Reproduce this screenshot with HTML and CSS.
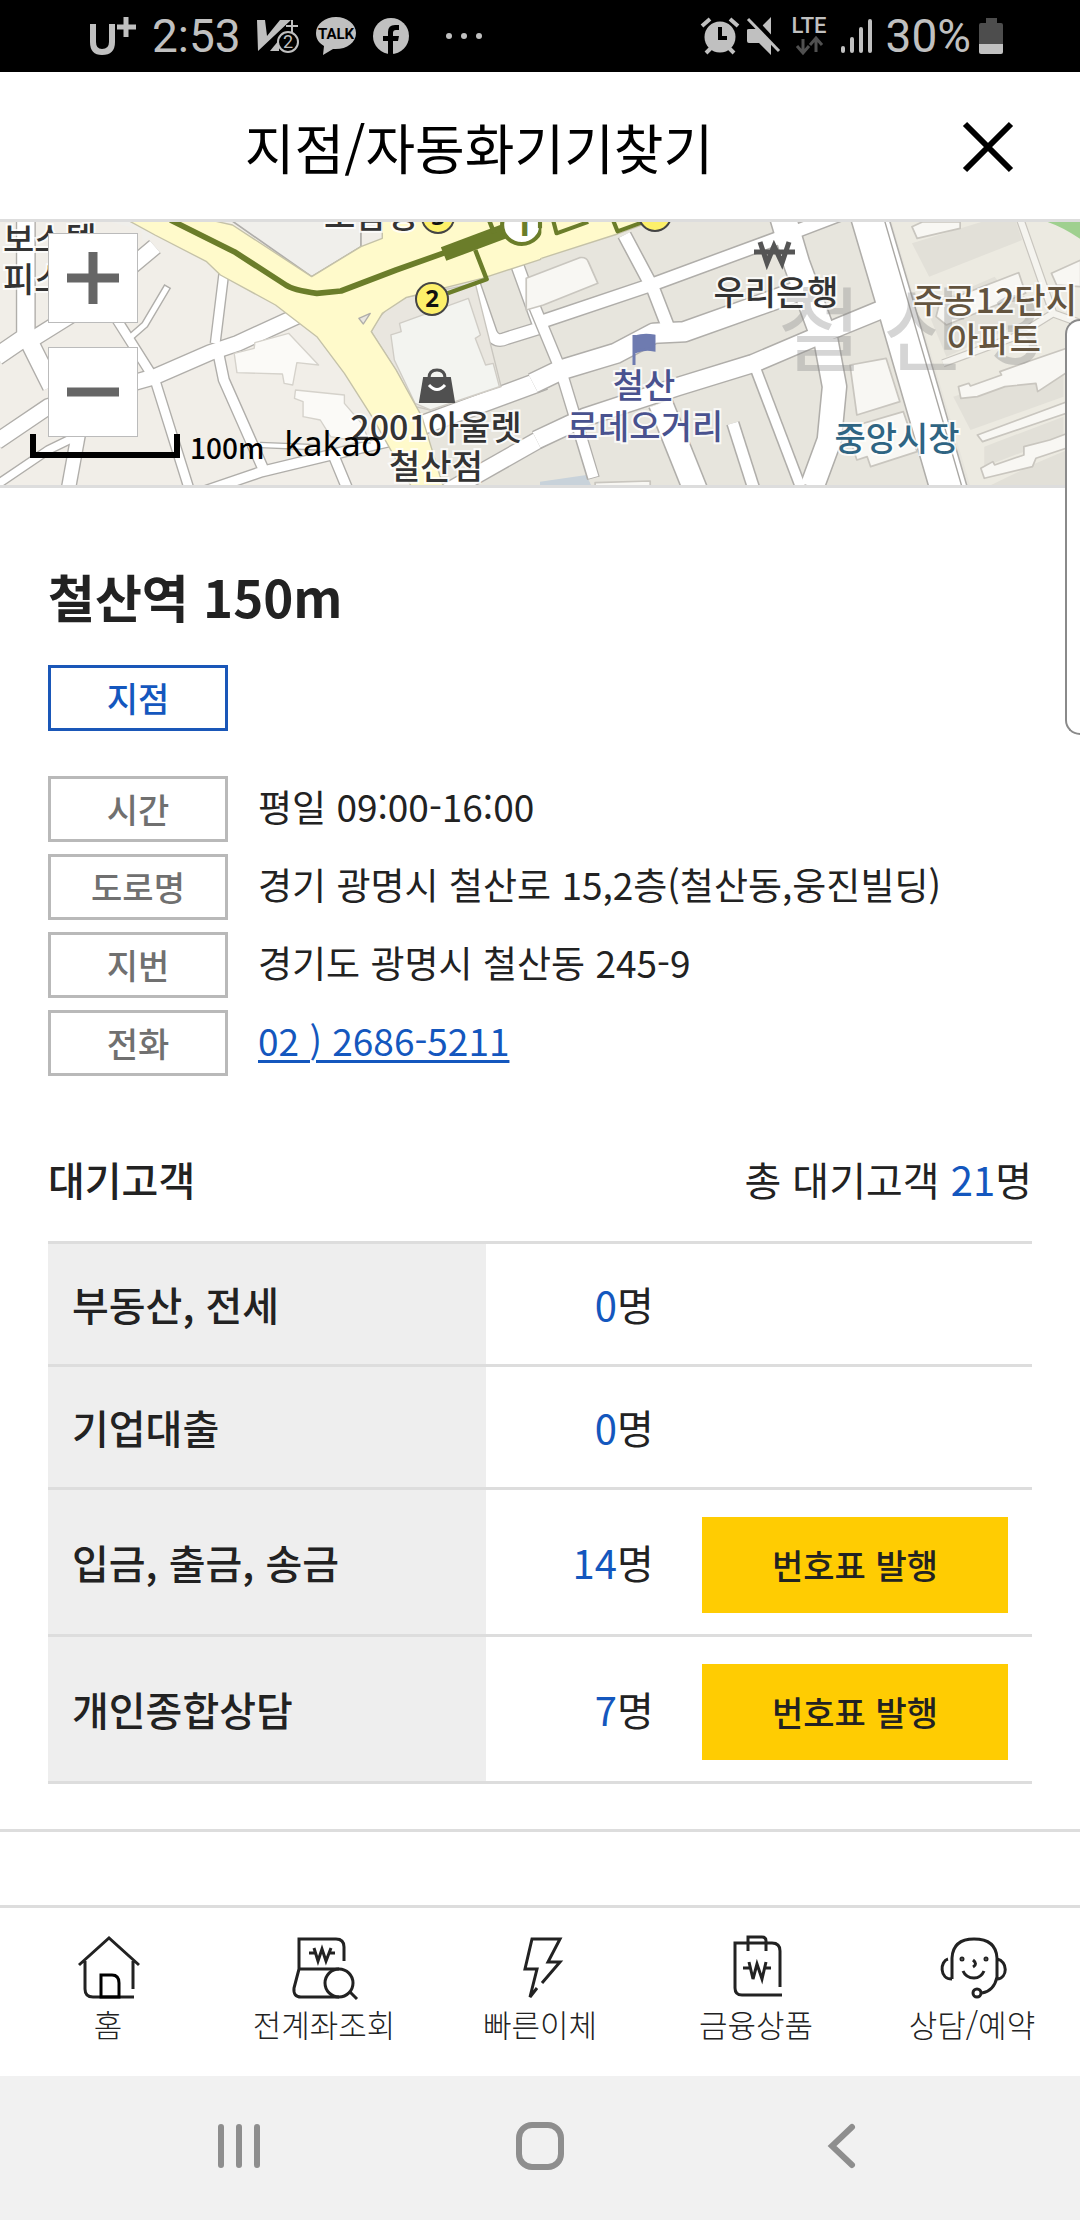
FILE: index.html
```html
<!DOCTYPE html>
<html lang="ko">
<head>
<meta charset="utf-8">
<meta name="viewport" content="width=device-width, initial-scale=1">
<title>지점/자동화기기찾기</title>
<link rel="stylesheet" href="styles.css">
</head>
<body>
<div class="status">
  <div class="status-side">
    <svg class="ic-carrier" width="48" height="40" viewBox="0 0 48 40" fill="none" stroke="#c0c0c0"><path d="M3 8V26Q3 36 12 36Q22 36 22 26V8" stroke-width="6"/><path d="M27 11H46M36 1V21" stroke-width="5"/></svg>
    <span class="status-text">2:53</span>
    <svg class="ic-v" width="42" height="36" viewBox="0 0 42 36"><path d="M0 2H8L10 18L23 2H34L1 33Z" fill="#c0c0c0"/><path d="M13 33L22 22V33Z" fill="#c0c0c0"/><path d="M29 8H41M35 2V14" stroke="#c0c0c0" stroke-width="2"/><circle cx="31" cy="24" r="10" fill="#000" stroke="#c0c0c0" stroke-width="2"/><text x="31" y="30" font-size="18" text-anchor="middle" fill="#c0c0c0">2</text></svg>
    <svg class="ic-talk" width="40" height="40" viewBox="0 0 40 40"><path d="M20 1C9 1 0 8 0 17C0 23 3 27 8 30L7 39L17 33C30 34 40 27 40 17C40 8 31 1 20 1Z" fill="#c0c0c0"/><text x="20" y="23" font-size="15" font-weight="700" text-anchor="middle">TALK</text></svg>
    <svg class="ic-fb" width="36" height="36" viewBox="0 0 36 36"><circle cx="18" cy="18" r="18" fill="#c0c0c0"/><path d="M15 36V23H10V18H15V14Q15 7 22 7H26V12H23Q20 12 20 15V18H26L25 23H20V36Z"/></svg>
    <svg class="ic-dots" width="38" height="8" viewBox="0 0 38 8" fill="#c0c0c0"><circle cx="4" cy="4" r="3"/><circle cx="19" cy="4" r="3"/><circle cx="34" cy="4" r="3"/></svg>
  </div>
  <div class="status-side">
    <svg width="38" height="38" viewBox="0 0 38 38"><g stroke="#c0c0c0" stroke-width="4"><path d="M1 9L9 2M29 2L37 9M5 36L11 30M27 30L33 36"/></g><circle cx="19" cy="20" r="15.500" fill="#c0c0c0"/><path d="M19 10V21H26" fill="none" stroke="#000" stroke-width="4"/></svg>
    <svg class="ic-mute" width="34" height="38" viewBox="0 0 34 38"><path d="M0 13Q0 12 2 12H12L24 0V38L12 26H2Q0 26 0 24Z" fill="#c0c0c0"/><path d="M3 -1L36 35" stroke="#000" stroke-width="6"/><path d="M1 2L32 34" stroke="#c0c0c0" stroke-width="3"/></svg>
    <svg class="ic-lte" width="38" height="40" viewBox="0 0 38 40"><text x="19" y="17" font-size="22" font-weight="500" text-anchor="middle" fill="#c0c0c0">LTE</text><path d="M13 23V36M7 30L13 37L19 30M26 36V23M20 29L26 22L32 29" fill="none" stroke="#505050" stroke-width="3"/></svg>
    <svg class="ic-signal" width="32" height="36" viewBox="0 0 32 36" stroke="#c0c0c0" stroke-width="4" stroke-linecap="round"><path d="M3 30V33M12 21V33M21 11V33M30 3V33"/></svg>
    <span class="status-text">30%</span>
    <svg class="ic-battery" width="24" height="36" viewBox="0 0 24 36"><path d="M7 0H18V5H22Q24 5 24 7V26H0V7Q0 5 2 5H7Z" fill="#4d4d4d"/><path d="M0 26H24V34Q24 36 22 36H2Q0 36 0 34Z" fill="#c0c0c0"/></svg>
  </div>
</div>

<header class="header">
  <h1>지점/자동화기기찾기</h1>
  <button class="close" aria-label="닫기"><svg width="52" height="52" viewBox="0 0 52 52"><path d="M3 3L49 49M49 3L3 49" stroke="#000" stroke-width="6"/></svg></button>
</header>

<div class="map">
  <svg class="map-art" viewBox="0 0 1080 263" preserveAspectRatio="xMidYMid slice">
    <rect width="1080" height="263" fill="#f1eee8"/>
    <rect x="520" width="560" height="263" fill="#e7e5dd"/>
    <!-- station side and west blocks -->
    <g transform="scale(.3444 .3333) translate(0 -36)" fill="none" stroke-linejoin="round">
      <path d="M1078 365L1180 262L1400 205L1568 150V830H1285L1225 620Z" fill="#e7e5dd"/>
      <path d="M670 30L905 200L1048 110V30Z" fill="#f0efeb" stroke="#b0aeaa" stroke-width="5"/>
      <path d="M300 30H380L450 75L415 95L410 60Z" fill="#f0efeb"/>
      <g stroke="#b0aeaa">
        <path d="M75 0V380L-10 440M75 375L150 530" stroke-width="58"/>
        <path d="M-10 695L140 590L450 500L610 428L690 400L880 310M75 400L230 300L450 110" stroke-width="52"/>
        <path d="M340 330L450 510L550 840M650 190L625 400" stroke-width="33"/>
        <path d="M375 385L420 345L487 228" stroke-width="23"/>
        <path d="M630 410L650 510L770 790M590 845L760 785L1000 725L1150 690M970 740L1010 840" stroke-width="36"/>
        <path d="M-10 825L140 720L240 670" stroke-width="30"/>
        <path d="M228 670L198 840" stroke-width="46"/>
        <path d="M755 705L920 712" stroke-width="20"/>
        <path d="M1200 655L1580 510" stroke-width="62"/>
        <path d="M1290 850L1580 680" stroke-width="55"/>
        <path d="M1375 220L1425 370Q1440 400 1470 385L1580 350M1500 160L1570 360" stroke-width="42"/>
      </g>
      <g stroke="#fff">
        <path d="M75 0V380L-10 440M75 375L150 530" stroke-width="50"/>
        <path d="M-10 695L140 590L450 500L610 428L690 400L880 310M75 400L230 300L450 110" stroke-width="44"/>
        <path d="M340 330L450 510L550 840M650 190L625 400" stroke-width="25"/>
        <path d="M375 385L420 345L485 232" stroke-width="15"/>
        <path d="M630 410L650 510L770 790M590 845L760 785L1000 725L1150 690M970 740L1010 840" stroke-width="28"/>
        <path d="M-10 825L140 720L240 670" stroke-width="22"/>
        <path d="M228 670L198 840" stroke-width="38"/>
        <path d="M755 705L920 712" stroke-width="12"/>
        <path d="M1200 655L1580 510" stroke-width="54"/>
        <path d="M1290 850L1580 680" stroke-width="47"/>
        <path d="M1375 220L1425 370Q1440 400 1470 385L1580 350M1500 160L1570 360" stroke-width="34"/>
      </g>
      <g fill="#fbfaf7" stroke="#d5d2cb" stroke-width="4">
        <path d="M680 430L738 415L740 398L838 370L925 465L862 458L850 525L825 520L820 492L688 488Z"/>
        <path d="M858 540L1000 555V580L1050 640L1075 700L960 680L930 630L880 620V575L855 565Z"/>
      </g>
      <path d="M1078 365Q1110 290 1180 262L1380 220L1455 530L1250 600L1205 590L1150 480Z" fill="#e9e6df" stroke="#c9c6bf" stroke-width="4"/>
      <path d="M1135 375L1165 365L1160 340L1360 265L1395 375L1380 385L1410 465L1432 460L1450 530L1250 600L1205 580L1145 450Z" fill="#f3f4f0" stroke="#d0cdc6" stroke-width="4"/>
      <path d="M370 30L450 75L600 155L640 195L800 285L920 380L1000 490L1080 620L1200 840H1290L1225 620L1150 480L1078 365L1110 310L1180 262L1400 205L1570 148V30H1110V85L1048 110L905 200L675 45L610 30Z" fill="#fffacb" stroke="#c5c2a8" stroke-width="4"/>
      <path d="M1042 325L1075 310L1055 342Z" fill="#e9e6df" stroke="#b0aeaa" stroke-width="4"/>
      <path d="M1562 30V147L1580 141V30Z" fill="#fffacb"/>
      <g stroke="#6b7d2a">
        <path d="M495 30L680 125L830 225Q850 240 920 250L990 243L1150 180L1300 125" stroke-width="17"/>
        <path d="M1288 132L1500 50" stroke-width="44"/>
        <path d="M1380 120L1413 208L1300 250M1420 30L1435 70" stroke-width="13"/>
        <circle cx="1515" cy="45" r="57" fill="#fff" stroke-width="12"/>
      </g>
    </g>
    <!-- east blocks -->
    <g transform="translate(540 -12) scale(.3444 .3333)" fill="none" stroke-linejoin="round">
      <path d="M1020 30L1250 830H1570V30Z" fill="#eceae1"/>
      <g fill="#e2e0d8"><path d="M1080 100L1300 30H1380L1400 90L1130 200Z"/><path d="M1120 290L1320 200L1420 330L1180 440Z"/><path d="M1200 560L1520 450V560L1250 660Z"/><path d="M1290 710L1520 620V680L1290 770ZM1300 830L1440 760L1530 720V830Z"/></g>
      <path d="M4 145L225 72L320 36V0H4Z" fill="#fffacb"/>
      <path d="M4 145L225 72L320 36" stroke="#c5c2a8" stroke-width="4"/>
      <path d="M0 815L135 795L150 830H0Z" fill="#c8d2da"/>
      <g stroke="#b0aeaa">
        <path d="M-10 340L330 222L690 85L880 10" stroke-width="45"/>
        <path d="M245 75L330 240L375 360" stroke-width="44"/>
        <path d="M-20 520L60 480L220 430L330 370L420 365L800 225" stroke-width="66"/>
        <path d="M-20 280L60 480L110 650L155 805" stroke-width="38"/>
        <path d="M-10 690L130 622L400 530L620 460L870 350L1000 295" stroke-width="60"/>
        <path d="M350 580L455 850" stroke-width="76"/>
        <path d="M560 640L625 850" stroke-width="40"/>
        <path d="M620 460L760 840" stroke-width="36"/>
        <path d="M830 390L855 530L840 690L790 830" stroke-width="76"/>
        <path d="M705 20L745 160L820 370" stroke-width="82"/>
        <path d="M950 0L1030 280L1190 850" stroke-width="112"/>
      </g>
      <g stroke="#fff">
        <path d="M-10 340L330 222L690 85L880 10" stroke-width="36"/>
        <path d="M245 75L330 240L375 360" stroke-width="35"/>
        <path d="M-20 520L60 480L220 430L330 370L420 365L800 225" stroke-width="57"/>
        <path d="M-20 280L60 480L110 650L155 802" stroke-width="30"/>
        <path d="M-10 690L130 622L400 530L620 460L870 350L1000 295" stroke-width="51"/>
        <path d="M350 580L455 850" stroke-width="67"/>
        <path d="M560 640L625 850" stroke-width="31"/>
        <path d="M620 460L760 840" stroke-width="27"/>
        <path d="M830 390L855 530L840 690L790 830" stroke-width="67"/>
        <path d="M705 20L745 160L820 370" stroke-width="73"/>
        <path d="M950 0L1030 280L1190 850" stroke-width="103"/>
      </g>
      <path d="M1000 30L1225 830" stroke="#a9a7a3" stroke-width="4"/>
      <g fill="#f8f7f3" stroke="#c9c6bf" stroke-width="5">
        <path d="M-40 205L115 143Q135 140 140 155L168 220L10 285L-40 300Z"/>
        <path d="M900 465L1005 445L1045 575L920 615Z"/>
        <path d="M890 655L1055 605L1095 725L960 770L950 740L920 750Z"/>
        <path d="M160 830V818L320 813V830Z"/>
        <path d="M1080 50L1110 36H1220V55L1095 85Z"/>
        <path d="M1150 320L1160 280L1390 188L1410 250L1180 345Z"/>
        <path d="M1485 190L1570 150V230L1500 225Z"/>
        <path d="M1215 530L1245 520L1250 528L1340 495L1335 485L1430 450L1570 400V460L1445 545L1440 520L1350 530L1270 560L1222 565Z"/>
        <path d="M1270 675L1570 560V595L1285 695Z"/>
        <path d="M1280 775L1315 755L1320 765L1405 735V710L1480 690L1570 655V700L1440 745L1430 770L1290 805Z"/>
      </g>
      <path d="M1395 30L1490 310L1380 380L1170 460M1490 310L1570 340" stroke="#c9c6bf" stroke-width="25"/>
      <path d="M1395 30L1490 310L1380 380L1170 460M1490 310L1570 340" stroke="#f5f4ef" stroke-width="18"/>
      <path d="M1455 30Q1510 45 1570 88V30Z" fill="#9fd08f"/>
      <path d="M0 30V55M38 30L48 70L140 36M212 30L225 64L300 36" stroke="#6b7d2a" stroke-width="12"/>
    </g>
    <g class="map-exit">
      <circle cx="432" cy="77" r="16"/><circle cx="438" cy="-5" r="16"/><circle cx="655" cy="-7" r="16"/>
      <text x="432" y="85">2</text><text x="438" y="3">3</text>
      <text class="line-no" x="523" y="14">1</text>
    </g>
    <g class="map-area"><text x="820" y="142">철</text><text x="925" y="142">산</text><text x="1017" y="142">3</text></g>
    <path d="M424 156H450L454 180H420Z" fill="#505050" stroke="#505050" stroke-width="2"/>
    <path d="M429 156Q429 148 437 148Q445 148 445 156" fill="none" stroke="#505050" stroke-width="3"/>
    <path d="M429 163Q437 172 445 163" fill="none" stroke="#fff" stroke-width="3"/>
    <path d="M634 143V113M635 115Q644 112 654 114V128Q644 126 635 130Z" fill="#6e7bb0" stroke="#6e7bb0" stroke-width="3"/>
    <path d="M754 30H795M760 20L767 41L774 24L782 41L789 20" fill="none" stroke="#555" stroke-width="5"/>
    <g class="map-label">
      <text x="3" y="30" class="start">보스텔</text>
      <text x="3" y="70" class="start">피스</text>
      <text x="324" y="6" class="start">보람병</text>
      <text x="436" y="218">2001아울렛</text>
      <text x="436" y="257">철산점</text>
      <text x="776" y="83">우리은행</text>
      <g fill="#49528f"><text x="644" y="176">철산</text><text x="645" y="217">로데오거리</text></g>
      <text x="897" y="229" fill="#2f6583">중앙시장</text>
      <g fill="#63543f"><text x="995" y="91">주공12단지</text><text x="994" y="130">아파트</text></g>
    </g>
  </svg>
  <div class="map-zoom">
    <button aria-label="확대"><svg width="52" height="52" viewBox="0 0 52 52"><path d="M0 26H52M26 0V52" stroke="#666" stroke-width="9"/></svg></button>
    <button aria-label="축소"><svg width="52" height="52" viewBox="0 0 52 52"><path d="M0 26H52" stroke="#666" stroke-width="9"/></svg></button>
  </div>
  <div class="map-scale"><span class="scale-bar"></span><span class="scale-text">100m</span><span class="scale-brand">kakao</span></div>
</div>

<main class="branch">
  <h2>철산역 150m</h2>
  <span class="tag tag-blue">지점</span>
  <dl class="info">
    <div><dt class="tag">시간</dt><dd>평일 09:00-16:00</dd></div>
    <div><dt class="tag">도로명</dt><dd>경기 광명시 철산로 15,2층(철산동,웅진빌딩)</dd></div>
    <div><dt class="tag">지번</dt><dd>경기도 광명시 철산동 245-9</dd></div>
    <div><dt class="tag">전화</dt><dd><a href="tel:0226865211">02 ) 2686-5211</a></dd></div>
  </dl>
  <div class="queue-head"><h3>대기고객</h3><p>총 대기고객 <b>21</b>명</p></div>
  <table class="queue">
    <tbody>
      <tr><th scope="row">부동산, 전세</th><td class="count"><b>0</b>명</td><td class="action"></td></tr>
      <tr><th scope="row">기업대출</th><td class="count"><b>0</b>명</td><td class="action"></td></tr>
      <tr><th scope="row">입금, 출금, 송금</th><td class="count"><b>14</b>명</td><td class="action"><button>번호표 발행</button></td></tr>
      <tr><th scope="row">개인종합상담</th><td class="count"><b>7</b>명</td><td class="action"><button>번호표 발행</button></td></tr>
    </tbody>
  </table>
</main>

<nav class="tabs">
  <a href="#home"><svg viewBox="0 0 80 64"><path d="M11 29L41 2L71 29M17 25V53Q17 61 25 61H66M65 25V53"/><path d="M33 61V39H44Q51 39 51 47V61Z" stroke="#000"/></svg>홈</a>
  <a href="#accounts"><svg viewBox="0 0 80 64"><path d="M60 25V11Q60 3 52 3H15V33H55M15 33L10 52Q9 61 17 61H55M66 56L73 63"/><circle cx="55" cy="47" r="14"/><path d="M25 17H31M45 17H51M30 12L34 25L38 13L42 25L47 12" stroke-width="3"/></svg>전계좌조회</a>
  <a href="#transfer"><svg viewBox="0 0 80 64"><path d="M42 47L60 26H48L60 3H32L25 33H37L30 61L37 52"/></svg>빠른이체</a>
  <a href="#products"><svg viewBox="0 0 80 64"><path d="M64 51V15Q64 7 56 7H19V52Q19 59 26 59H66M32 15V1H46Q50 1 50 5V15M27 32H34M49 32H55M33 26L37 43L41 28L46 43L50 26"/></svg>금융상품</a>
  <a href="#counsel"><svg viewBox="0 0 80 64"><path d="M20 43V22Q21 3 42 3Q64 3 65 22V41Q62 55 50 57M16 23C8 25 7 43 20 43M65 23C76 25 76 42 65 43M31 35Q34 42 42 42Q49 42 52 35M41 24Q46 28 41 31"/><circle cx="45" cy="57" r="4"/><circle cx="30" cy="23" r="1"/><circle cx="54" cy="23" r="1"/></svg>상담/예약</a>
</nav>

<div class="sysnav">
  <button aria-label="최근 앱"><svg width="48" height="48" viewBox="0 0 48 48"><path d="M6 5V43M24 5V43M42 5V43"/></svg></button>
  <button aria-label="홈 화면"><svg width="48" height="48" viewBox="0 0 48 48"><rect x="3" y="3" width="42" height="42" rx="13"/></svg></button>
  <button aria-label="뒤로"><svg width="48" height="48" viewBox="0 0 48 48"><path d="M35 5L15 24L35 43"/></svg></button>
</div>

<div class="edge-panel"></div>
</body>
</html>
```

FILE: styles.css
```css
* { box-sizing: border-box; margin: 0; padding: 0; }
body {
  position: relative;
  background: #fff;
  color: #222;
  font-family: "Noto Sans CJK KR", sans-serif;
  overflow-x: hidden;
}
button { border: 0; background: none; font: inherit; color: inherit; }
svg { display: block; flex: none; }
h2 { font-weight: 700; }
h3, th { font-weight: 500; }

.status {
  display: flex;
  justify-content: space-between;
  height: 72px;
  padding: 0 77px 0 90px;
  background: #000;
  color: #c0c0c0;
  font-family: Roboto, sans-serif;
}
.status-side { display: flex; align-items: center; }
.status-side svg { overflow: visible; }
.status-text { font-size: 46px; line-height: 72px; }
.ic-carrier { margin-right: 14px; }
.ic-v { margin-left: 16px; }
.ic-talk, .ic-fb { margin-left: 17px; }
.ic-dots { margin-left: 36px; }
.ic-mute { margin-left: 8px; }
.ic-lte { margin-left: 9px; }
.ic-signal { margin: 0 14px 0 12px; }
.ic-battery { margin-left: 8px; }

.header {
  display: flex;
  align-items: center;
  height: 147px;
  padding: 2px 66px 0 60px;
}
.header h1 { flex: 1; text-align: center; font-size: 54px; font-weight: 400; color: #000; }
.close { width: 52px; height: 52px; margin-left: 64px; }

.map {
  position: relative;
  height: 269px;
  border-top: 3px solid #ddd;
  border-bottom: 3px solid #ddd;
  overflow: hidden;
}
.map-art { width: 100%; height: 263px; }
.map-label text { font-size: 34px; font-weight: 500; text-anchor: middle; paint-order: stroke; stroke: #fff; stroke-width: 4px; stroke-opacity: .8; }
.map-label { fill: #333; }
.map-label .start { text-anchor: start; }
.map-exit circle { fill: #fdf06a; stroke: #444; stroke-width: 2px; }
.map-exit text { font: 700 24px "Noto Sans", sans-serif; text-anchor: middle; fill: #111; }
.map-exit .line-no { font-size: 34px; fill: #6b7d2a; }
.map-area text { font-size: 92px; text-anchor: middle; fill: #888; fill-opacity: .35; }
.map-zoom { position: absolute; top: 11px; left: 48px; display: grid; gap: 24px; }
.map-zoom button {
  display: grid;
  place-items: center;
  width: 90px;
  height: 90px;
  background: #fff;
  border: 1px solid #bbb;
}
.map-scale { position: absolute; left: 30px; bottom: 18px; display: flex; align-items: flex-end; color: #000; }
.scale-bar { width: 150px; height: 24px; margin: 0 10px 9px 0; border: 6px solid #000; border-top: 0; }
.scale-text { font-size: 28px; font-weight: 500; line-height: 40px; }
.scale-brand { margin-left: 20px; font: 400 35px/48px "Noto Sans", sans-serif; }

.branch { padding: 68px 48px 45px; border-bottom: 3px solid #ddd; }
.branch h2 { margin-bottom: 29px; font-size: 51px; line-height: 80px; }
.tag {
  display: block;
  flex: none;
  width: 180px;
  height: 66px;
  border: 3px solid #b9b9b9;
  color: #707070;
  font-size: 34px;
  font-weight: 500;
  line-height: 60px;
  text-align: center;
}
.tag-blue { border-color: #1a57b8; color: #1457be; }
.info { display: grid; gap: 12px; margin-top: 45px; }
.info div { display: flex; gap: 30px; }
.info dd { font-size: 37px; line-height: 60px; white-space: nowrap; }
.info a { color: #1457be; text-decoration-thickness: 3px; text-underline-offset: 4px; }

.queue-head {
  display: flex;
  justify-content: space-between;
  margin: 73px 0 32px;
  font-size: 40px;
  line-height: 60px;
}
.queue-head h3 { font-size: 40px; }
b { font-weight: 400; color: #1457be; }
.queue { width: 100%; table-layout: fixed; border-spacing: 0; border-top: 3px solid #ddd; font-size: 40px; line-height: 72px; }
.queue th, .queue td { padding: 24px; border-bottom: 3px solid #ddd; }
.queue th { width: 44.5%; background: #eee; text-align: left; }
.queue .count { width: 19.5%; text-align: right; }
.queue .action { width: 36%; padding: 27px 24px 21px 0; }
.queue button {
  display: block;
  width: 306px;
  height: 96px;
  margin-left: auto;
  background: #ffcc02;
  font-size: 34px;
  font-weight: 500;
}

.tabs {
  display: grid;
  grid-template-columns: repeat(5, 1fr);
  height: 171px;
  margin-top: 73px;
  padding-top: 28px;
  border-top: 3px solid #ddd;
}
.tabs a {
  display: flex;
  flex-direction: column;
  align-items: center;
  color: #222;
  font-size: 31px;
  font-weight: 300;
  line-height: 48px;
  text-decoration: none;
}
.tabs svg { width: 80px; height: 64px; overflow: visible; fill: none; stroke: #222; stroke-width: 3px; }

.sysnav {
  display: grid;
  grid-template-columns: repeat(3, 1fr);
  place-items: center;
  height: 144px;
  padding: 0 88px 4px;
  background: #f1f1f1;
}
.sysnav svg { fill: none; stroke: #8e8e8e; stroke-width: 6px; stroke-linecap: round; }

.edge-panel {
  position: absolute;
  top: 319px;
  right: 0;
  width: 15px;
  height: 416px;
  background: #fff;
  border: 2px solid #8a8a8a;
  border-right: 0;
  border-radius: 16px 0 0 16px;
}
```
